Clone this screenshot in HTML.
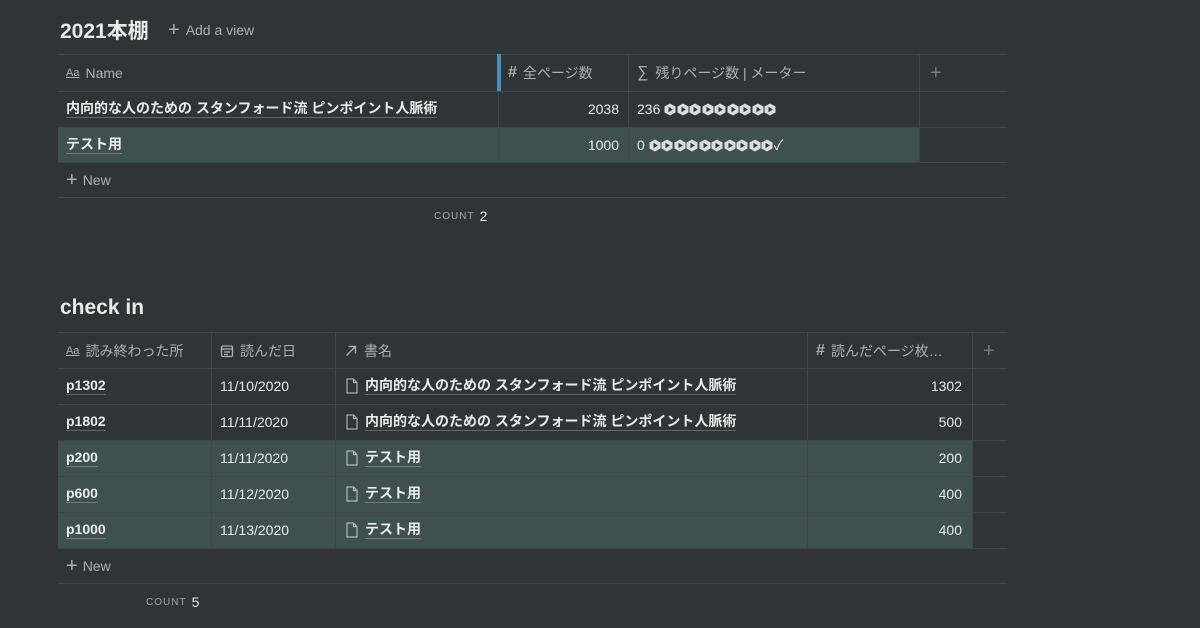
<!DOCTYPE html>
<html><head><meta charset="utf-8"><style>
body{margin:0;width:1200px;height:628px;background:#2f3437;font-family:"Liberation Sans","Noto Sans CJK JP",sans-serif;color:rgba(255,255,255,.9);position:relative;overflow:hidden}
.a{position:absolute;white-space:nowrap;display:flex;align-items:center;height:36px}
.h{height:1px;background:#40454a;position:absolute}
.v{width:1px;background:#40454a;position:absolute}
.hl{position:absolute;background:#3f5050}
.hd{color:rgba(255,255,255,.6);font-size:14px}
.c{font-size:14px}
.b{font-weight:bold;font-size:14px}
.u{border-bottom:1px solid rgba(255,255,255,.25);line-height:17px}
.cnt{font-size:10px;letter-spacing:1px;color:rgba(255,255,255,.55)}
.cnt b{font-size:14px;letter-spacing:0;color:rgba(255,255,255,.9);font-weight:normal;margin-left:5px}
.r{justify-content:flex-end}
svg{flex:none}
.ic{margin-right:6px}
.m{display:inline-block;width:12px;height:13px;margin-right:0.5px}
</style></head><body>
<svg width="0" height="0" style="position:absolute"><defs><symbol id="p" viewBox="0 0 12 13"><path d="M6 .5L11.5 3.5V9.5L6 12.5L.5 9.5V3.5Z" fill="#d8dcdc"/><path d="M4.5 3.8L8.8 6.5L4.5 9.2Z" fill="#2f3437"/></symbol></defs></svg>
<div class="a" style="left:60px;top:12px;font-size:21px;font-weight:bold">2021本棚</div>
<div class="a hd" style="left:168px;top:12px"><span style="font-size:20px;margin-right:6px;font-weight:300">+</span>Add a view</div>

<div class="hl" style="left:58px;top:127px;width:861px;height:35px"></div>
<div class="h" style="left:58px;top:54px;width:949px"></div>
<div class="h" style="left:58px;top:91px;width:949px"></div>
<div class="h" style="left:58px;top:127px;width:949px"></div>
<div class="h" style="left:58px;top:162px;width:949px"></div>
<div class="h" style="left:58px;top:197px;width:949px"></div>
<div class="v" style="left:498px;top:54px;height:108px"></div>
<div class="a" style="left:497px;top:54px;width:4px;height:37px;background:#4a8fc0"></div>
<div class="v" style="left:628px;top:54px;height:108px"></div>
<div class="v" style="left:919px;top:54px;height:108px"></div>
<div class="a hd" style="left:66px;top:55px"><span style="font-size:11px;text-decoration:underline;margin-right:6px">Aa</span>Name</div>
<div class="a hd" style="left:508px;top:55px"><span style="font-size:16px;font-weight:bold;margin-right:6px">#</span>全ページ数</div>
<div class="a hd" style="left:637px;top:55px"><span style="font-size:16px;margin-right:7px">∑</span>残りページ数 | メーター</div>
<div class="a hd" style="left:930px;top:55px;font-size:20px;color:rgba(255,255,255,.35)">+</div>
<div class="a b" style="left:66px;top:91px"><span class="u">内向的な人のための スタンフォード流 ピンポイント人脈術</span></div>
<div class="a c r" style="left:540px;top:91px;width:79px">2038</div>
<div class="a c" style="left:637px;top:91px">236&nbsp;<svg class="m"><use href="#p"/></svg><svg class="m"><use href="#p"/></svg><svg class="m"><use href="#p"/></svg><svg class="m"><use href="#p"/></svg><svg class="m"><use href="#p"/></svg><svg class="m"><use href="#p"/></svg><svg class="m"><use href="#p"/></svg><svg class="m"><use href="#p"/></svg><svg class="m"><use href="#p"/></svg></div>
<div class="a b" style="left:66px;top:127px"><span class="u">テスト用</span></div>
<div class="a c r" style="left:540px;top:127px;width:79px">1000</div>
<div class="a c" style="left:637px;top:127px">0&nbsp;<svg class="m"><use href="#p"/></svg><svg class="m"><use href="#p"/></svg><svg class="m"><use href="#p"/></svg><svg class="m"><use href="#p"/></svg><svg class="m"><use href="#p"/></svg><svg class="m"><use href="#p"/></svg><svg class="m"><use href="#p"/></svg><svg class="m"><use href="#p"/></svg><svg class="m"><use href="#p"/></svg><svg class="m"><use href="#p"/></svg>✓</div>
<div class="a hd" style="left:66px;top:162px"><span style="font-size:20px;margin-right:5px;font-weight:300">+</span>New</div>
<div class="a cnt" style="left:434px;top:198px">COUNT<b>2</b></div>

<div class="a" style="left:60px;top:290px;font-size:21px;font-weight:bold">check in</div>
<div class="hl" style="left:58px;top:440px;width:914px;height:108px"></div>
<div class="h" style="left:58px;top:332px;width:949px"></div>
<div class="h" style="left:58px;top:368px;width:949px"></div>
<div class="h" style="left:58px;top:404px;width:949px"></div>
<div class="h" style="left:58px;top:440px;width:949px"></div>
<div class="h" style="left:58px;top:476px;width:949px"></div>
<div class="h" style="left:58px;top:512px;width:949px"></div>
<div class="h" style="left:58px;top:548px;width:949px"></div>
<div class="h" style="left:58px;top:583px;width:949px"></div>
<div class="v" style="left:211px;top:332px;height:216px"></div>
<div class="v" style="left:335px;top:332px;height:216px"></div>
<div class="v" style="left:807px;top:332px;height:216px"></div>
<div class="v" style="left:972px;top:332px;height:216px"></div>
<div class="a hd" style="left:66px;top:333px"><span style="font-size:11px;text-decoration:underline;margin-right:6px">Aa</span>読み終わった所</div>
<div class="a hd" style="left:220px;top:333px"><svg class="ic" width="14" height="14" viewBox="0 0 14 14" fill="none" stroke="rgba(255,255,255,.6)" stroke-width="1.3"><rect x="1.5" y="2" width="11" height="10.5" rx="1.5"/><path d="M1.5 5h11M4 8h6M4 10.5h4"/></svg>読んだ日</div>
<div class="a hd" style="left:344px;top:333px"><svg class="ic" width="14" height="14" viewBox="0 0 14 14" fill="none" stroke="rgba(255,255,255,.6)" stroke-width="1.4"><path d="M2.5 11.5l9-9M4.5 2.5h7v7"/></svg>書名</div>
<div class="a hd" style="left:816px;top:333px"><span style="font-size:16px;font-weight:bold;margin-right:6px">#</span>読んだページ枚…</div>
<div class="a hd" style="left:983px;top:333px;font-size:20px;color:rgba(255,255,255,.35)">+</div>

<div class="a b" style="left:66px;top:368px"><span class="u">p1302</span></div>
<div class="a c" style="left:220px;top:368px">11/10/2020</div>
<div class="a b" style="left:345px;top:368px"><svg class="ic" width="14" height="16" viewBox="0 0 14 16" fill="none" stroke="rgba(255,255,255,.6)" stroke-width="1.2"><path d="M2 1h6.5L12 4.5V15H2z M8.5 1v3.5H12"/></svg><span class="u">内向的な人のための スタンフォード流 ピンポイント人脈術</span></div>
<div class="a c r" style="left:880px;top:368px;width:82px">1302</div>

<div class="a b" style="left:66px;top:404px"><span class="u">p1802</span></div>
<div class="a c" style="left:220px;top:404px">11/11/2020</div>
<div class="a b" style="left:345px;top:404px"><svg class="ic" width="14" height="16" viewBox="0 0 14 16" fill="none" stroke="rgba(255,255,255,.6)" stroke-width="1.2"><path d="M2 1h6.5L12 4.5V15H2z M8.5 1v3.5H12"/></svg><span class="u">内向的な人のための スタンフォード流 ピンポイント人脈術</span></div>
<div class="a c r" style="left:880px;top:404px;width:82px">500</div>

<div class="a b" style="left:66px;top:440px"><span class="u">p200</span></div>
<div class="a c" style="left:220px;top:440px">11/11/2020</div>
<div class="a b" style="left:345px;top:440px"><svg class="ic" width="14" height="16" viewBox="0 0 14 16" fill="none" stroke="rgba(255,255,255,.6)" stroke-width="1.2"><path d="M2 1h6.5L12 4.5V15H2z M8.5 1v3.5H12"/></svg><span class="u">テスト用</span></div>
<div class="a c r" style="left:880px;top:440px;width:82px">200</div>

<div class="a b" style="left:66px;top:476px"><span class="u">p600</span></div>
<div class="a c" style="left:220px;top:476px">11/12/2020</div>
<div class="a b" style="left:345px;top:476px"><svg class="ic" width="14" height="16" viewBox="0 0 14 16" fill="none" stroke="rgba(255,255,255,.6)" stroke-width="1.2"><path d="M2 1h6.5L12 4.5V15H2z M8.5 1v3.5H12"/></svg><span class="u">テスト用</span></div>
<div class="a c r" style="left:880px;top:476px;width:82px">400</div>

<div class="a b" style="left:66px;top:512px"><span class="u">p1000</span></div>
<div class="a c" style="left:220px;top:512px">11/13/2020</div>
<div class="a b" style="left:345px;top:512px"><svg class="ic" width="14" height="16" viewBox="0 0 14 16" fill="none" stroke="rgba(255,255,255,.6)" stroke-width="1.2"><path d="M2 1h6.5L12 4.5V15H2z M8.5 1v3.5H12"/></svg><span class="u">テスト用</span></div>
<div class="a c r" style="left:880px;top:512px;width:82px">400</div>

<div class="a hd" style="left:66px;top:548px"><span style="font-size:20px;margin-right:5px;font-weight:300">+</span>New</div>
<div class="a cnt" style="left:146px;top:584px">COUNT<b>5</b></div>
</body></html>
